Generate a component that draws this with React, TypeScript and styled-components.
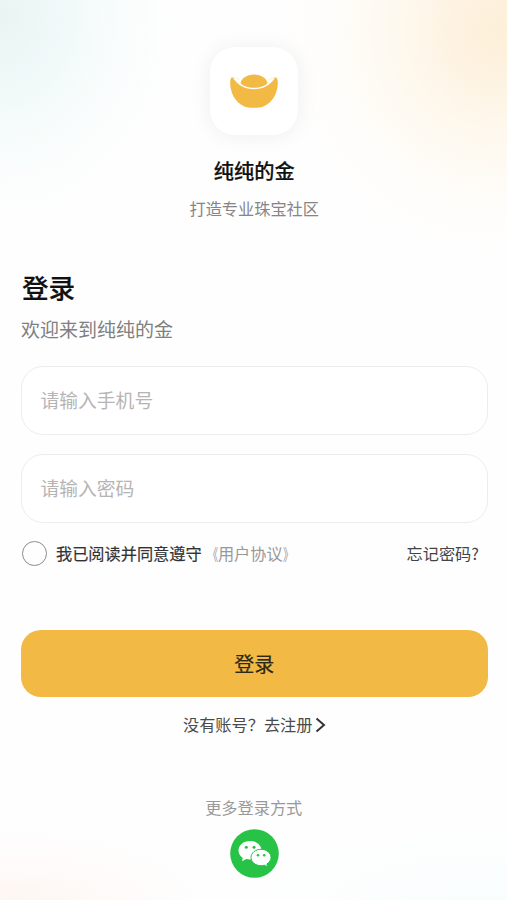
import React, { useState } from "react";
import styled, { createGlobalStyle } from "styled-components";

const GlobalStyle = createGlobalStyle`
  *, *::before, *::after { box-sizing: border-box; }
  body { margin: 0; background: #fefefe; }
  body, input, button { font-family: "Noto Sans CJK SC", sans-serif; }
`;

const Page = styled.main`
  display: flex;
  flex-direction: column;
  width: 507px;
  height: 900px;
  padding: 47px 19.5px 0 21px;
  overflow: hidden;
  background:
    radial-gradient(ellipse 220px 230px at 500px 30px, #fdf0da 0%, rgba(253, 241, 221, 0.9) 20%, rgba(254, 246, 231, 0.65) 48%, rgba(254, 251, 243, 0.35) 75%, rgba(254, 254, 254, 0) 100%),
    radial-gradient(ellipse 175px 205px at 0 15px, #eaf4f3 0%, rgba(237, 248, 247, 0.9) 30%, rgba(243, 251, 250, 0.6) 62%, rgba(254, 254, 254, 0) 100%),
    radial-gradient(ellipse 190px 80px at 15px 910px, #fef5f0 0%, rgba(254, 248, 245, 0.6) 50%, rgba(254, 254, 254, 0) 100%),
    radial-gradient(ellipse 230px 80px at 485px 912px, #f7fdfc 0%, rgba(250, 254, 254, 0.6) 50%, rgba(254, 254, 254, 0) 100%),
    #fefefe;
`;

const Brand = styled.header`
  display: flex;
  flex-direction: column;
  align-items: center;
`;

const LogoTile = styled.div`
  display: grid;
  place-items: center;
  width: 88px;
  height: 88px;
  border-radius: 25px;
  background: #fff;
  box-shadow: 0 1px 22px rgba(0, 0, 0, 0.065);
`;

const BrandName = styled.h1`
  margin: 22px 0 0;
  font-size: 20.2px;
  font-weight: 500;
  line-height: 28px;
  color: #111;
  -webkit-text-stroke: 0.2px #111;
`;

const Tagline = styled.p`
  margin: 11px 0 0;
  font-size: 16.2px;
  line-height: 24px;
  color: #858585;
`;

const Heading = styled.h2`
  margin: 49px 0 0 1px;
  font-size: 26.6px;
  font-weight: 500;
  line-height: 36px;
  color: #111;
  -webkit-text-stroke: 0.2px #111;
`;

const Welcome = styled.p`
  margin: 10px 0 0;
  font-size: 19px;
  line-height: 28px;
  color: #808080;
`;

const Form = styled.form`
  display: flex;
  flex-direction: column;
`;

const Field = styled.input`
  width: 100%;
  height: 69px;
  margin: 0 0 19px;
  padding: 0 19px 2px 18.5px;
  border: 1.5px solid #ededed;
  border-radius: 22px;
  outline: none;
  background: #fff;
  font-size: 18.8px;
  color: #222;
  &::placeholder { color: #b7b4b4; opacity: 1; }
`;

const Fields = styled.div`
  margin-top: 23px;
`;

const Options = styled.div`
  display: flex;
  align-items: center;
  justify-content: space-between;
  height: 26px;
  margin: -2px 8.5px 1px 0;
  font-size: 16.2px;
  line-height: 24px;
  color: #444;
`;

const Agreement = styled.div`
  display: flex;
  align-items: center;
`;

const Check = styled.button<{ $on: boolean }>`
  width: 25px;
  height: 25px;
  margin: 0 9.5px 0 0.5px;
  padding: 0;
  border: 1.5px solid #8c8c8c;
  border-radius: 50%;
  background: ${(p) => (p.$on ? "#f2b944" : "transparent")};
`;

const AgreementText = styled.span`
  padding-bottom: 1px;
  color: #333;
  -webkit-text-stroke: 0.2px #333;
`;

const Terms = styled.span`
  padding-bottom: 1px;
  color: #999;
`;

const Bracket = styled.span<{ $side: "left" | "right" }>`
  display: inline-block;
  transform: scaleX(0.66);
  transform-origin: ${(p) => (p.$side === "left" ? "right" : "left")} center;
`;

const Forgot = styled.span`
  padding-bottom: 1px;
`;

const Submit = styled.button`
  height: 67px;
  margin: 63px 0 0;
  padding: 0;
  border: 0;
  border-radius: 20px;
  background: #f2b944;
  font-size: 20px;
  line-height: 28px;
  color: #2e2818;
  -webkit-text-stroke: 0.2px #2e2818;
`;

const Register = styled.p`
  display: flex;
  align-items: center;
  justify-content: center;
  margin: 15px 0 0;
  font-size: 16.2px;
  line-height: 24px;
  color: #4a4a4a;
`;

const Chevron = styled.svg`
  margin: 1px 0 0 2px;
`;

const More = styled.section`
  display: flex;
  flex-direction: column;
  align-items: center;
  margin-top: 59px;
`;

const MoreLabel = styled.p`
  margin: 0 1px 10px 0;
  font-size: 16.2px;
  line-height: 24px;
  color: #999;
`;

const Ingot = () => (
  <svg width="48" height="34" viewBox="0 0 48 34" fill="#f2b944">
    <path d="M2.2 3.2C.9 3.6 .2 5.600 .2 8.800C.2 23 10 33.800 21 33.800H27C38 33.800 47.800 23 47.800 8.800C47.800 5.600 47.100 3.600 45.800 3.200C45.100 3.200 44.800 3.900 44.200 5C40 11.500 32.500 15.300 24 15.300S8 11.500 3.800 5C3.200 3.900 2.900 3.200 2.200 3.200Z" />
    <path d="M2.500 3.600Q6.500 3.200 9.500 6M45.500 3.600Q41.500 3.200 38.500 6" fill="none" stroke="#f8dfad" strokeWidth=".6" />
    <path d="M10.500 9.200C11.500 4 17 .5 24 .5s12.500 3.500 13.500 8.700C35 12 30 13.700 24 13.700S13 12 10.500 9.200Z" />
  </svg>
);

const WeChat = () => (
  <svg width="49" height="49" viewBox="0 0 49 49">
    <circle cx="24.500" cy="24.500" r="24.300" fill="#27c346" />
    <path d="M20 12c-6.500 0-11.500 4.200-11.500 9.500 0 3.100 1.700 5.700 4.300 7.400L12 32.300l4.200-2.200c1.200.300 2.500.500 3.800.500 6.400 0 11.500-4.100 11.500-9.200S26.400 12 20 12Z" fill="#fff" />
    <path d="M31 20.300c-5.600 0-10 3.700-10 8.200s4.400 8.200 10 8.200c1.200 0 2.300-.200 3.400-.500l3.200 1.800-.700-3.100c2.500-1.500 4.100-3.800 4.100-6.400 0-4.500-4.400-8.200-10-8.200Z" fill="#fff" stroke="#27c346" strokeWidth="1" />
    <g fill="#27c346">
      <circle cx="16.300" cy="18.200" r="1.500" />
      <circle cx="24" cy="18.200" r="1.500" />
      <circle cx="28" cy="26.200" r="1.250" />
      <circle cx="34.200" cy="26.200" r="1.250" />
    </g>
  </svg>
);

export default function App() {
  const [agreed, setAgreed] = useState(false);
  return (
    <>
      <GlobalStyle />
      <Page>
        <Brand>
          <LogoTile><Ingot /></LogoTile>
          <BrandName>纯纯的金</BrandName>
          <Tagline>打造专业珠宝社区</Tagline>
        </Brand>
        <Heading>登录</Heading>
        <Welcome>欢迎来到纯纯的金</Welcome>
        <Form onSubmit={(e) => e.preventDefault()}>
          <Fields>
            <Field type="tel" placeholder="请输入手机号" />
            <Field type="password" placeholder="请输入密码" />
          </Fields>
          <Options>
            <Agreement>
              <Check type="button" $on={agreed} onClick={() => setAgreed(!agreed)} />
              <AgreementText>我已阅读并同意遵守</AgreementText>
              <Terms>
                <Bracket $side="left">《</Bracket>用户协议<Bracket $side="right">》</Bracket>
              </Terms>
            </Agreement>
            <Forgot>忘记密码?</Forgot>
          </Options>
          <Submit type="submit">登录</Submit>
        </Form>
        <Register>
          没有账号？去注册
          <Chevron width="11" height="16" viewBox="0 0 11 16" fill="none" stroke="#333" strokeWidth="2">
            <path d="M1.500 1.500 9 8l-7.500 6.500" />
          </Chevron>
        </Register>
        <More>
          <MoreLabel>更多登录方式</MoreLabel>
          <WeChat />
        </More>
      </Page>
    </>
  );
}
